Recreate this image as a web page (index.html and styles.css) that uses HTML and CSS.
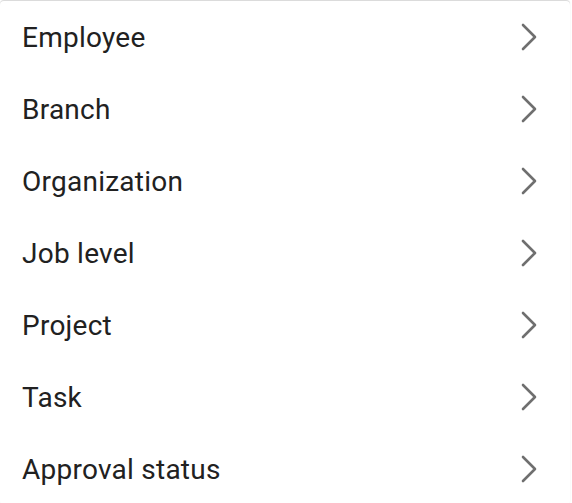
FILE: index.html
```html
<!DOCTYPE html>
<html lang="en">
<head>
  <meta charset="UTF-8">
  <title>Menu</title>
  <link rel="stylesheet" href="styles.css">
</head>
<body>
  <div class="card">
    <ul class="menu">
      <li class="item"><span>Employee</span><svg class="chev" viewBox="0 0 16 28"><path d="M2 2 L14 14 L2 26"/></svg></li>
      <li class="item"><span>Branch</span><svg class="chev" viewBox="0 0 16 28"><path d="M2 2 L14 14 L2 26"/></svg></li>
      <li class="item"><span>Organization</span><svg class="chev" viewBox="0 0 16 28"><path d="M2 2 L14 14 L2 26"/></svg></li>
      <li class="item"><span>Job level</span><svg class="chev" viewBox="0 0 16 28"><path d="M2 2 L14 14 L2 26"/></svg></li>
      <li class="item"><span>Project</span><svg class="chev" viewBox="0 0 16 28"><path d="M2 2 L14 14 L2 26"/></svg></li>
      <li class="item"><span>Task</span><svg class="chev" viewBox="0 0 16 28"><path d="M2 2 L14 14 L2 26"/></svg></li>
      <li class="item"><span>Approval status</span><svg class="chev" viewBox="0 0 16 28"><path d="M2 2 L14 14 L2 26"/></svg></li>
    </ul>
  </div>
</body>
</html>
```

FILE: styles.css
```css
body {
  margin: 0;
  background: #fff;
  font-family: Roboto, "Liberation Sans", sans-serif;
}
.card {
  margin: 1px 2px 0 0;
  background: #fff;
  border-radius: 4px;
  box-shadow: 0 -1px 1px rgba(0, 0, 0, 0.16);
}
.menu {
  list-style: none;
  margin: 0;
  padding: 0;
}
.item {
  display: flex;
  align-items: center;
  justify-content: space-between;
  height: 72px;
  padding: 0 33px 0 22px;
  font-size: 28px;
  letter-spacing: 0.25px;
  color: #212121;
}
.chev {
  width: 16px;
  height: 28px;
  fill: none;
  stroke: #6f6f6f;
  stroke-width: 2.6;
  stroke-linecap: round;
  stroke-linejoin: round;
}
```
